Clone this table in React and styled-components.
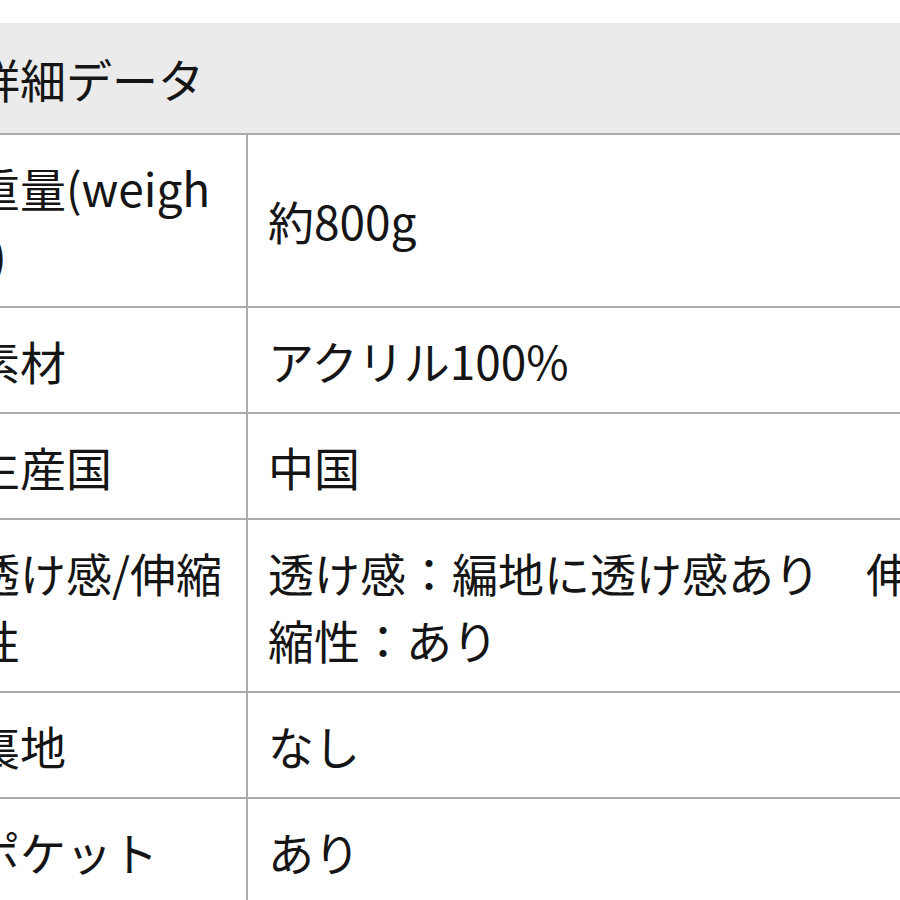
import React from "react";
import styled, { createGlobalStyle } from "styled-components";

const Global = createGlobalStyle`
  html, body { margin: 0; padding: 0; background: #ffffff; }
  body { font-family: "Noto Sans CJK JP", "Noto Sans", sans-serif; }
`;

const Viewport = styled.div`
  width: 900px;
  height: 900px;
  overflow: hidden;
  background: #ffffff;
  padding-top: 23px;
  box-sizing: border-box;
`;

const Table = styled.table`
  margin-left: -46px;
  width: 1001px;
  table-layout: fixed;
  border-collapse: separate;
  border-spacing: 0;
  font-size: 46px;
  line-height: 67px;
  color: #151515;
  font-family: "Noto Sans CJK JP", "Noto Sans", sans-serif;
`;

const HeadCell = styled.th`
  text-align: left;
  font-weight: 400;
  background: #ebebeb;
  padding: 21.5px 20px;
  border-bottom: 2px solid #ababab;
`;

const Cell = styled.td`
  vertical-align: middle;
  padding: 18.5px ${(p) => (p.$label ? "18px" : "20px")} 18.5px 20px;
  border-bottom: 2px solid #ababab;
  border-right: ${(p) => (p.$label ? "2px solid #ababab" : "none")};
  word-break: ${(p) => (p.$label ? "break-all" : "normal")};
`;

const rows = [
  [
    "weight",
    <>
      重量(weigh
      <br />
      t)
    </>,
    "約800g",
  ],
  ["material", "素材", "アクリル100%"],
  ["origin", "生産国", "中国"],
  ["sheer", "透け感/伸縮性", "透け感：編地に透け感あり　伸縮性：あり"],
  ["lining", "裏地", "なし"],
  ["pocket", "ポケット", "あり"],
];

export default function App() {
  return (
    <>
      <Global />
      <Viewport>
        <Table>
          <colgroup>
            <col style={{ width: "294px" }} />
            <col style={{ width: "707px" }} />
          </colgroup>
          <thead>
            <tr>
              <HeadCell colSpan={2}>詳細データ</HeadCell>
            </tr>
          </thead>
          <tbody>
            {rows.map(([id, k, v]) => (
              <tr key={id}>
                <Cell $label>{k}</Cell>
                <Cell>{v}</Cell>
              </tr>
            ))}
          </tbody>
        </Table>
      </Viewport>
    </>
  );
}
